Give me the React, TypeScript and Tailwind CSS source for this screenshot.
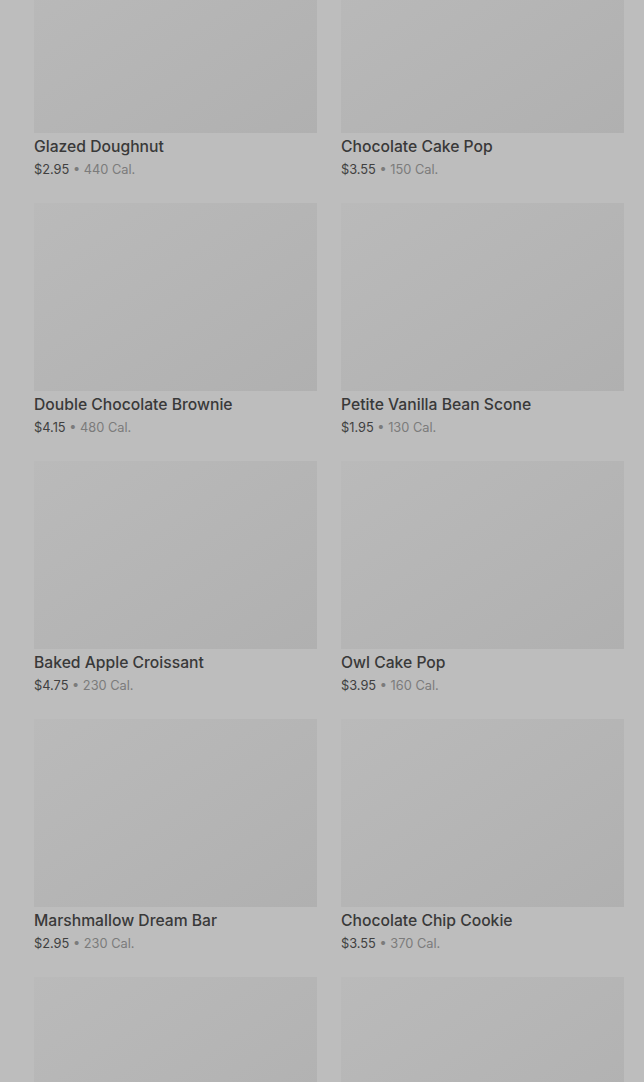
import React from 'react';

interface Item {
    name: string;
    price: string;
    cal: string;
}

const items: Item[] = [
    { name: 'Glazed Doughnut', price: '$2.95', cal: '440 Cal.' },
    { name: 'Chocolate Cake Pop', price: '$3.55', cal: '150 Cal.' },
    { name: 'Double Chocolate Brownie', price: '$4.15', cal: '480 Cal.' },
    { name: 'Petite Vanilla Bean Scone', price: '$1.95', cal: '130 Cal.' },
    { name: 'Baked Apple Croissant', price: '$4.75', cal: '230 Cal.' },
    { name: 'Owl Cake Pop', price: '$3.95', cal: '160 Cal.' },
    { name: 'Marshmallow Dream Bar', price: '$2.95', cal: '230 Cal.' },
    { name: 'Chocolate Chip Cookie', price: '$3.55', cal: '370 Cal.' },
    { name: '', price: '', cal: '' },
    { name: '', price: '', cal: '' },
];

const ItemCard: React.FC<{ item: Item }> = ({ item }) => (
    <div className="flex flex-col">
        <div className="h-[188px] w-full bg-gradient-to-br from-[#bababa] to-[#b0b0b0]" />
        {item.name && (
            <>
                <div className="mt-[4px] text-[15.7px] leading-5 font-medium text-[#393939]">
                    {item.name}
                </div>
                <div className="mt-[4px] text-[12.8px] leading-[18px] text-[#404040]">
                    {item.price}
                    <span className="text-[#7b7b7b]"> • {item.cal}</span>
                </div>
            </>
        )}
    </div>
);

export default function App() {
    return (
        <div
            className="h-[1082px] w-full overflow-hidden bg-[#bdbdbd]"
            style={{ fontFamily: 'Inter, "Noto Sans", sans-serif' }}
        >
            <div className="-mt-[55px] grid grid-cols-2 gap-x-6 gap-y-6 pl-[34px] pr-5">
                {items.map((item, i) => (
                    <ItemCard key={i} item={item} />
                ))}
            </div>
        </div>
    );
}
